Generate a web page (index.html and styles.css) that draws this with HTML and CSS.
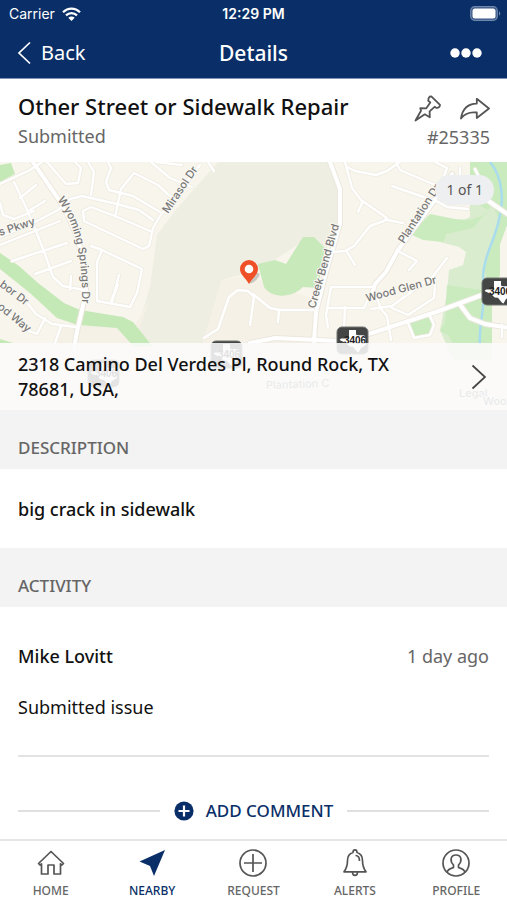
FILE: index.html
```html
<!DOCTYPE html>
<html lang="en">
<head>
<meta charset="utf-8">
<meta name="viewport" content="width=device-width, initial-scale=1">
<title>Details</title>
<link rel="stylesheet" href="styles.css">
</head>
<body>
<div class="app">
  <header class="top">
    <div class="status">
      <div class="carrier"><span>Carrier</span>
        <svg width="19" height="14" viewBox="0 0 19 14" aria-hidden="true"><g fill="none" stroke="#fff" stroke-width="2.3"><path d="M1 5.2C6 .3 13 .3 18 5.2"/><path d="M4 8.3c3.200-3 7.800-3 11 0"/></g><path d="M9.500 14 6.300 10.700c1.800-1.700 4.600-1.700 6.400 0z" fill="#fff"/></svg>
      </div>
      <time class="clock">12:29 PM</time>
      <svg class="battery" width="31" height="15" viewBox="0 0 31 15" aria-hidden="true"><rect x=".7" y=".7" width="26.600" height="13.600" rx="4" fill="#3a5988" stroke="#7088ab" stroke-width="1.200"/><rect x="2.500" y="2.500" width="23" height="10" rx="2.500" fill="#fff"/><path d="M29 5.300c1.700.8 1.700 3.600 0 4.400z" fill="#7088ab"/></svg>
    </div>
    <nav class="nav">
      <button class="back" type="button"><svg width="15" height="24" viewBox="0 0 15 24" aria-hidden="true"><path d="M13 1.500 2 12l11 10.500" fill="none" stroke="#fff" stroke-width="1.700"/></svg><span>Back</span></button>
      <h1>Details</h1>
      <button class="more" type="button" aria-label="More"><svg width="32" height="10" viewBox="0 0 32 10"><g fill="#fff"><circle cx="5" cy="5" r="4.700"/><circle cx="16" cy="5" r="4.700"/><circle cx="27" cy="5" r="4.700"/></g></svg></button>
    </nav>
  </header>

  <section class="summary">
    <div class="heading">
      <h2>Other Street or Sidewalk Repair</h2>
      <p>Submitted</p>
    </div>
    <div class="side">
      <div class="actions">
        <button type="button" aria-label="Pin"><svg width="28" height="28" viewBox="0 0 28 28"><path d="M2.500 26.500 8 16.800 7.300 14.200 13.300 14.300 17.300 8.500 15.300 6.800C15.200 4 16.300 2.200 18.300 2.400L27 10.800C27 13 25.300 14.300 22.800 13.600L21.600 12.800 16.600 17.400 16.800 23.300 11.800 20.300Z" fill="none" stroke="#555" stroke-width="1.800" stroke-linejoin="round"/></svg></button>
        <button type="button" aria-label="Share"><svg width="32" height="28" viewBox="0 0 32 28"><path d="M3 24.500C4.500 14 10 9.800 18.800 9.600V4.800L31 14.500 18.800 24V18.500C11.500 17.700 6.500 19.500 3 24.500Z" fill="none" stroke="#555" stroke-width="1.800" stroke-linejoin="round"/></svg></button>
      </div>
      <p>#25335</p>
    </div>
  </section>

  <section class="map">
    <svg class="canvas" viewBox="0 162 507 248" preserveAspectRatio="xMidYMid slice" role="img" aria-label="Map of the reported location">
      <defs>
        <g id="roads" fill="none" stroke-linejoin="round" stroke-linecap="round">
          <path d="M14 182 24 203 34 226 45 254 53 277 63 286 84 290M0 184 30 170 42 162M0 237 35 222 58 210 70 199 82 196 117 204 139 210 153 220M47 162 66 184 78 183 81 168 75 162M88 162 94 172 91 195M108 162 111 168 106 182 109 190 133 196 160 212M115 217 121 189 134 173 158 185 171 197M150 231 115 216 91 207 83 211 84 221 143 249 149 246 153 228 160 216 200 165M91 246 102 250 142 269 137 293 130 307 97 301 97 262 102 250M0 245 60 221M12 261 67 243M35 274 71 261M20 198 36 185M30 210 45 201M0 203 3 215 14 219 34 211M112 302 119 275M70 290 71 276M151 162 170 178 192 187M156 162 182 165M208 162 214 171M28 304 36 314 52 324 76 327M45 318 37 334 27 330M61 326 55 343M0 307 30 332M204 338 218 329 229 297 238 290 248 291 254 297 250 325M118 285 111 301"/>
          <path d="M345 162 352 188 361 200 387 218 384 221 370 226 354 246 345 251 333 252M347 167 355 171 376 175 387 171 400 162M387 220 403 223M363 201 358 212M347 252 355 265M396 162 400 170 440 187M392 186 438 202 447 207 468 209M435 162 447 168 444 176M460 168V184M398 251 417 261 409 270M447 258 433 276 392 306 371 309M375 293 381 309 387 316 391 340M331 287H375M331 287 326 315 328 328M345 307 344 328M329 308H364L371 292M253 294 270 308 280 310H313M279 310 278 322M408 323 414 338 430 335 434 325 430 316M392 308 408 315 434 298 435 284M502 325V337M475 169 479 177"/>
        </g>
        <g id="avenues" fill="none" stroke-linejoin="round" stroke-linecap="round">
          <path d="M33 162 57 197C73 222 86 254 86 290 82 315 76 330 74 350M330 162 340 189 340 224 326 272 316 312 314 342M452 174 432 204 398 250 386 272 375 284 372 294M250 343 275 338 338 341 372 333 436 312 490 292M487 200 510 216M461 306 470 318 485 324 510 328"/>
        </g>
        <g id="shield">
          <rect width="31" height="27" rx="5" fill="#444645" stroke="#737573"/>
          <path d="M12 3h7v4.500c3 1.500 6 0 9 1.500l1 9-5 3-2.500 4.500c-3-.8-3.500-5-6.500-6-3 1-4-2.500-6-3.500L2.500 13 4 11.500H12z" fill="#fff"/>
          <text x="18" y="16.500" text-anchor="middle" class="route">3406</text>
        </g>
        <path id="wyoming" d="M57 200C75 222 81 254 82 290V330"/>
      </defs>
      <rect y="162" width="507" height="248" fill="#f8f5ed"/>
      <path d="M218 162H330L341 190 338 228 326 249 300 243 260 270 222 280 203 343H133L150 287 157 235 174 212Z" fill="#efeee2"/>
      <path d="M222 280 248 276 314 299 313 343H203ZM61 326 134 326 150 300 133 343H55Z" fill="#f6f1e7"/>
      <path d="M0 253 19 266 38 283 64 303 80 310 123 317 133 322 153 347H134L117 328 78 325 57 318 30 293 0 269ZM0 165 11 163 15 174 0 182ZM0 339 13 343H0Z" fill="#c5e8b7"/>
      <path d="M258 264 275 260 286 264 303 237 314 237 325 248 318 288 303 287C292 298 272 299 264 287Z" fill="#c8e9ba"/>
      <path d="M470 162H507V225L500 244 500 270 492 295V360H453L440 330 447 293 449 270 463 265 466 252 459 247 440 242 460 222 470 217Z" fill="#d9edce"/>
      <path d="M470 162H507V225L500 244V275L492 290 484 270 499 219 492 204 485 215 470 220 455 219 430 214 410 234 423 240 443 242 447 234 473 228 488 210 470 200ZM447 285 481 290 492 299V343H453L448 335 440 331 445 323ZM409 324 430 315 434 327 430 335 415 338Z" fill="#caebbe"/>
      <path d="M490 162C503 177 504 203 499 219 496 238 484 254 483 276 487 306 478 323 480 345" fill="none" stroke="#a9dcec" stroke-width="2.500"/>
      <use href="#roads" stroke="#efebe2" stroke-width="4"/>
      <use href="#avenues" stroke="#ebe7de" stroke-width="6"/>
      <use href="#roads" stroke="#fff" stroke-width="2.400"/>
      <use href="#avenues" stroke="#fff" stroke-width="4"/>
      <g class="street">
        <text><textPath href="#wyoming">Wyoming Springs Dr</textPath></text>
        <text transform="translate(168 214) rotate(-56)">Mirasol Dr</text>
        <text transform="translate(0 236) rotate(-18)">s Pkwy</text>
        <text transform="translate(-1 286) rotate(37)">bor Dr</text>
        <text transform="translate(-3 308) rotate(39)">od Way</text>
        <text transform="translate(315 309) rotate(-74)">Creek Bend Blvd</text>
        <text transform="translate(404 244) rotate(-57)">Plantation Dr</text>
        <text transform="translate(367 302) rotate(-15)">Wood Glen Dr</text>
        <text transform="translate(266 389) rotate(-2)">Plantation C</text>
        <text x="459" y="397">Legal</text>
        <text x="483" y="405">Wood</text>
      </g>
      <use href="#shield" x="337" y="327"/>
      <use href="#shield" x="211" y="341"/>
      <use href="#shield" x="88" y="360"/>
      <use href="#shield" x="482" y="278"/>
      <ellipse cx="254" cy="278" rx="7" ry="3" fill="#777" opacity=".35" transform="rotate(-42 254 278)"/>
      <path d="M249 284C246 278 240 275 240 269a9 9 0 0 1 18 0c0 6-6 9-9 15z" fill="#ef5028"/>
      <circle cx="249" cy="269" r="4.300" fill="#fff"/>
    </svg>
    <span class="count">1 of 1</span>
    <button class="address" type="button">
      <span>2318 Camino Del Verdes Pl, Round Rock, TX 78681, USA,</span>
      <svg width="16" height="26" viewBox="0 0 16 26" aria-hidden="true"><path d="M1.500 1.500 14 13 1.500 24.500" fill="none" stroke="#444" stroke-width="1.700"/></svg>
    </button>
  </section>

  <h3 class="section-title">DESCRIPTION</h3>
  <p class="description">big crack in sidewalk</p>
  <h3 class="section-title">ACTIVITY</h3>
  <main class="activity">
    <article>
      <div class="entry-head"><strong>Mike Lovitt</strong><time>1 day ago</time></div>
      <p>Submitted issue</p>
    </article>
    <div class="add-row">
      <button class="add" type="button"><svg width="20" height="20" viewBox="0 0 20 20" aria-hidden="true"><circle cx="10" cy="10" r="9.600" fill="#0a2f68"/><path d="M10 4.500v11M4.500 10h11" stroke="#fff" stroke-width="2.200"/></svg><span>ADD COMMENT</span></button>
    </div>
  </main>

  <nav class="tabs">
    <a href="#home"><svg viewBox="0 0 30 30" aria-hidden="true"><path d="m2.500 15.500 12.500-12 12.500 12-1.500 1.500-1.500-1.200V26H18V17h-6v9H5.500V15.800L4 17z"/></svg><span>HOME</span></a>
    <a href="#nearby" class="active"><svg viewBox="0 0 30 30" aria-hidden="true"><path d="M28 2 17 28 13 18 2.500 13.500z"/></svg><span>NEARBY</span></a>
    <a href="#request"><svg viewBox="0 0 30 30" aria-hidden="true"><circle cx="15" cy="15" r="13"/><path d="M15 6v18M6 15h18"/></svg><span>REQUEST</span></a>
    <a href="#alerts"><svg viewBox="0 0 30 30" aria-hidden="true"><path d="M13 4.500c0-3.500 4-3.500 4 0 4 1.200 5.500 4 5.500 8 0 6 1 8 3.500 11.300H4C6.500 20.500 7.500 18.500 7.500 12.500c0-4 1.500-6.800 5.500-8zM12.500 24c0 4.500 5 4.500 5 0M15.500 7.500c3 0 4 2 4 5.500"/></svg><span>ALERTS</span></a>
    <a href="#profile"><svg viewBox="0 0 30 30" aria-hidden="true"><circle cx="15" cy="15" r="13"/><path d="M6 24c1-3 3-3.500 6.500-4.500v-2.500C8.500 13 9.500 7 15 7s6.500 6 2.500 10v2.500C21 20.500 23 21 24 24"/></svg><span>PROFILE</span></a>
  </nav>
</div>
</body>
</html>
```
FILE: styles.css
```css
* { box-sizing: border-box; }
body { margin: 0; background: #fff; color: #111; font-family: "Noto Sans", "Open Sans", sans-serif; }
h1, h2, h3, p { margin: 0; font-weight: 400; }
button { border: 0; padding: 0; background: none; color: inherit; font: inherit; cursor: pointer; }
svg { display: block; flex: none; }
.app { display: flex; flex-direction: column; min-height: 100vh; }

.top { background: #0a2f68; color: #fff; border-bottom: 1px solid #7f93b4; }
.status { display: grid; grid-template-columns: 1fr auto 1fr; align-items: center; height: 27px; padding: 0 6px; font: 14px/20px Inter, sans-serif; }
.carrier { display: flex; align-items: center; gap: 7px; padding-left: 3px; }
.clock { font-weight: 600; }
.battery { justify-self: end; }
.nav { display: grid; grid-template-columns: 1fr auto 1fr; align-items: center; height: 51px; padding: 0 17px; font-size: 20px; line-height: 28px; }
.back { display: flex; align-items: center; gap: 9px; justify-self: start; }
.nav h1 { font-size: 21px; font-weight: 500; }
.more { justify-self: end; padding: 8px; }

.summary { display: flex; justify-content: space-between; height: 83px; padding: 12px 17px 0 18px; color: #666; font-size: 18px; line-height: 26px; }
.heading { display: flex; flex-direction: column; gap: 2px; }
.summary h2 { color: #111; font-size: 22px; font-weight: 500; line-height: 30px; }
.side { display: flex; flex-direction: column; text-align: right; }
.actions { display: flex; align-items: center; justify-content: flex-end; gap: 17px; height: 33px; }

.map { position: relative; }
.canvas { width: 100%; height: 248px; }
.street { fill: #777; stroke: #fbf9f3; stroke-width: 2px; paint-order: stroke; font: 500 11px Inter, sans-serif; }
.route { fill: #222; font: bold 10px "Liberation Sans", sans-serif; }
.count { position: absolute; top: 13px; right: 13px; padding: 0 11px; border-radius: 15px; background: #eeeff0; color: #555; font-size: 14px; line-height: 30px; }
.address { position: absolute; inset: auto 0 0; display: flex; align-items: center; justify-content: space-between; padding: 9px 20px 8px 18px; background: rgba(250, 250, 250, .88); text-align: left; font-size: 18px; font-weight: 500; line-height: 25px; }
.address span { max-width: 400px; }

.section-title { padding: 25px 18px 8px; background: #f3f3f3; color: #666; font-size: 17px; font-weight: 500; line-height: 26px; }
.description { padding: 27px 18px 26px; font-size: 18px; font-weight: 500; line-height: 26px; }
.activity { flex: 1; padding: 36px 18px 0; font-size: 18px; line-height: 26px; }
.activity article { padding-bottom: 35px; border-bottom: 2px solid #e3e3e3; }
.entry-head { display: flex; justify-content: space-between; margin-bottom: 25px; }
.entry-head strong { font-weight: 500; }
.entry-head time { color: #666; }
.add-row { display: flex; align-items: center; gap: 14px; padding: 41px 0 15px; }
.add-row::before, .add-row::after { content: ""; flex: 1; height: 2px; background: #e0e0e0; }
.add { display: flex; align-items: center; gap: 12px; color: #0a2f68; font-size: 17px; font-weight: 500; line-height: 26px; }

.tabs { display: grid; grid-template-columns: repeat(5, 1fr); height: 61px; border-top: 2px solid #e6e6e6; }
.tabs a { display: flex; flex-direction: column; align-items: center; gap: 4px; padding-top: 7px; color: #666; font-size: 12px; font-weight: 500; line-height: 18px; text-decoration: none; }
.tabs svg { width: 30px; height: 30px; fill: none; stroke: #555; stroke-width: 1.7; stroke-linejoin: round; }
.tabs .active { color: #0a2f68; }
.tabs .active svg { fill: #0a2f68; stroke: none; }
```
